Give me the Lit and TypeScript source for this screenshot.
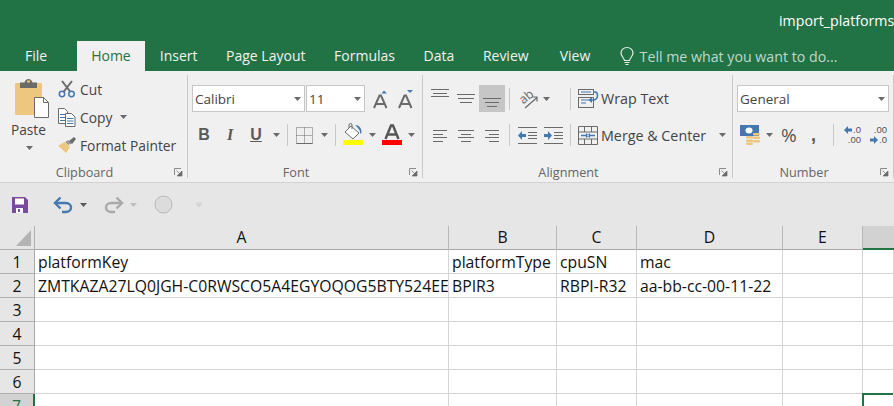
import { LitElement, html, svg, css } from 'lit';
import { customElement } from 'lit/decorators.js';

const BLUE = '#4478ae';
const GREY = '#6a6a6a';

// small svg wrapper, sizes are the pixel size of the ribbon glyphs
const icon = (w: number, h: number, body: unknown) =>
  html`<svg width=${w} height=${h} viewBox="0 0 ${w} ${h}" fill="none">${body}</svg>`;

const caret = () =>
  icon(7, 4, svg`<path d="M0 0h7L3.5 4z" fill="#6a6a6a"/>`);

// alignment glyphs: rows of [x, y, length], y counted from the top of the cell
const lines = (w: number, h: number, rows: number[][]) =>
  icon(w, h, rows.map(([x, y, l]) => svg`<rect x=${x} y=${y} width=${l} height="1" fill=${GREY}/>`));

const pasteIcon = icon(36, 40, svg`
  <rect x="1" y="4" width="27" height="32" rx="1" fill="#edc77e"/>
  <path d="M6 5V3.500h4.500Q11.500 0 14.500 0T18.500 3.500H23V9H6z" fill="#6a6a6a"/>
  <rect x="13" y="1.500" width="3" height="2" fill="#edc77e"/>
  <path d="M20.500 18.500h9l5 5v15h-14z" fill="#fff" stroke="#6a6a6a"/>
  <path d="M29.500 18.500v5h5" stroke="#6a6a6a"/>
`);

const cutIcon = icon(18, 18, svg`
  <path d="M4 1l8.500 11M14 1L5.500 12" stroke="#6a6a6a" stroke-width="2"/>
  <circle cx="4" cy="14" r="2.700" stroke=${BLUE} stroke-width="1.500"/>
  <circle cx="13.500" cy="14" r="2.700" stroke=${BLUE} stroke-width="1.500"/>
`);

const copyIcon = icon(18, 19, svg`
  <path d="M.5.500h6l3 3v12h-9z" fill="#fff" stroke="#6a6a6a"/>
  <path d="M2 6.500h6M2 9.500h6M2 12.500h6" stroke=${BLUE}/>
  <path d="M7.500 5.500h6l3.500 3.500v9.500h-9.500z" fill="#fff" stroke="#6a6a6a"/>
  <path d="M9 10.500h6.500M9 13h6.500M9 15.500h6.500" stroke=${BLUE}/>
`);

const painterIcon = icon(18, 16, svg`
  <path d="M0 8.500l7-3.500 5 5-4 6z" fill="#edc77e"/>
  <path d="M8 4.500l3 3M9.500 3.500l3.500 3.500" stroke="#8a8a8a" stroke-width="1.500"/>
  <path d="M11 4l5-4 2 2-4 5z" fill="#6a6a6a"/>
`);

const growIcon = (up: boolean) => icon(16, 18, svg`
  <path d="M1 18L6.500 5.500h1.500L13.500 18M3 14h9" stroke="#6a6a6a" stroke-width="2"/>
  <path d=${up ? 'M8.500 3.500L11 .5l3 3z' : 'M9 0h6l-3 3z'} fill=${BLUE}/>
`);

const borderIcon = icon(17, 17, svg`
  <path d="M.5.500h16v16h-16zM8.500.500v16M.5 8.500h16" stroke="#6a6a6a" stroke-dasharray="1 1"/>
  <path d="M.5 16.500h16" stroke="#6a6a6a"/>
`);

const fillIcon = icon(20, 24, svg`
  <path d="M8 3l8 7-6 6-8-7z" fill="#fff" stroke="#6a6a6a"/>
  <path d="M6 5V2a1.500 1.500 0 013 0v4" stroke="#6a6a6a"/>
  <path d="M12 2c4 0 6.500 3 6.500 7 0 2-1.500 2-1.500 0 0-2-2-4-5-7z" fill=${BLUE}/>
  <rect x="0" y="17" width="20" height="5" fill="#ffff00"/>
`);

const fontColorIcon = icon(20, 24, svg`
  <path d="M3.500 16L9 2.500h2L16.500 16M5.500 11.500h9" stroke="#555" stroke-width="2.400"/>
  <rect x="0" y="17" width="20" height="5" fill="#ff0000"/>
`);

const orientIcon = icon(20, 20, svg`
  <path d="M7 19L18.500 9M14.500 8h4.500v4.500" stroke="#6a6a6a" stroke-width="1.200"/>
  <text x="1.500" y="13" transform="rotate(-40 7 9)" font-family="Open Sans" font-size="12.500" fill="#6a6a6a">ab</text>
`);

const indentIcon = (dec: boolean) => icon(19, 17, svg`
  <path d="M0 .5h19M0 16.500h19M10 5.500h9M10 8.500h9M10 11.500h9" stroke="#6a6a6a"/>
  ${dec
    ? svg`<path d="M0 8.500l4-4.500v3h4v3H4v3z" fill=${BLUE}/>`
    : svg`<path d="M8 8.500l-4-4.500v3H0v3h4v3z" fill=${BLUE}/>`}
`);

const wrapIcon = icon(20, 19, svg`
  <rect x=".5" y=".5" width="15" height="5" stroke="#6a6a6a"/>
  <rect x=".5" y="8.500" width="15" height="10" stroke="#6a6a6a"/>
  <path d="M3 3h10M3 11h9M3 14h5" stroke=${BLUE}/>
  <path d="M15 3h2q2.500 0 2.500 3.500T16 11h-4" stroke=${BLUE} stroke-width="1.500"/>
  <path d="M14 8l-3.500 3 3.500 3z" fill=${BLUE}/>
`);

const mergeIcon = icon(20, 19, svg`
  <path d="M.5.500h19v18H.5zM.5 6h19M.5 13h19M6.500.500V6M13.500.500V6M6.500 13v5.500M13.500 13v5.500" stroke="#6a6a6a"/>
  <path d="M3 9.500h5M17 9.500h-5" stroke=${BLUE} stroke-width="1.500"/>
  <path d="M8 7l3 2.500-3 2.500zM12 7L9 9.500l3 2.500z" fill=${BLUE}/>
`);

const currencyIcon = icon(20, 20, svg`
  <rect x="0" y="0" width="19" height="11" fill=${BLUE}/>
  <ellipse cx="9" cy="5.500" rx="3.500" ry="3" fill="#fff"/>
  <rect x="13" y="8" width="7" height="2.500" rx="1" fill="#edc77e"/>
  <rect x="13" y="11.500" width="7" height="2.500" rx="1" fill="#edc77e"/>
  <rect x="13" y="15" width="7" height="2.500" rx="1" fill="#edc77e"/>
  <rect x="6" y="11" width="7" height="2.500" rx="1" fill="#edc77e"/>
  <rect x="6" y="14.500" width="7" height="2.500" rx="1" fill="#edc77e"/>
  <rect x="6" y="17.500" width="7" height="2.500" rx="1" fill="#edc77e"/>
`);

const arrow = (right: boolean) => right
  ? svg`<path d="M8 4L4 0v2.500H0v3h4V8z" fill=${BLUE}/>`
  : svg`<path d="M0 4l4-4v2.500h4v3H4V8z" fill=${BLUE}/>`;

const launcher = icon(8, 8, svg`
  <path d="M.5 7V.5H7" stroke="#8a8a8a"/>
  <path d="M2.500 2.500l3.500 3.500M8 3v5H3z" stroke="#6a6a6a" fill="#6a6a6a" stroke-width=".7"/>
`);

const COLS = ['A', 'B', 'C', 'D', 'E'];
const ROWS: string[][] = [
  ['platformKey', 'platformType', 'cpuSN', 'mac', '', ''],
  ['ZMTKAZA27LQ0JGH-C0RWSCO5A4EGYOQOG5BTY524EE', 'BPIR3', 'RBPI-R32', 'aa-bb-cc-00-11-22', '', ''],
  ['', '', '', '', '', ''],
  ['', '', '', '', '', ''],
  ['', '', '', '', '', ''],
  ['', '', '', '', '', ''],
  ['', '', '', '', '', ''],
];

@customElement('app-root')
export class AppRoot extends LitElement {
  static styles = css`
    :host {
      display: block;
      width: 894px;
      height: 406px;
      overflow: hidden;
      background: #e6e6e6;
      font-family: 'Open Sans', sans-serif;
      color: #444;
    }
    svg { display: block; flex: none; overflow: visible; }

    .title {
      height: 41px;
      background: #217346;
      color: #fff;
      font-size: 14.200px;
      line-height: 41px;
      padding-left: 779px;
      white-space: nowrap;
      overflow: hidden;
    }
    .tabs {
      height: 30px;
      background: #217346;
      display: flex;
      align-items: center;
      padding-left: 25px;
      color: #f1f1f1;
      font-size: 14px;
      white-space: nowrap;
    }
    .tab { padding: 0 14.300px; line-height: 30px; }
    .tab.file { padding: 0 15px 0 0; margin-right: 15px; }
    .tab.active { background: #f0f0f0; color: #217346; padding: 0 14px; margin-right: .7px; }
    .tab.view { margin-left: 2.500px; }
    .tell {
      display: flex;
      align-items: center;
      gap: 6px;
      margin-left: 15px;
      font-size: 14.200px;
      color: #bfd9ca;
    }

    .ribbon {
      height: 112px;
      box-sizing: border-box;
      display: flex;
      background: #f0f0f0;
      border-bottom: 1px solid #d2d2d2;
      font-size: 14px;
      white-space: nowrap;
    }
    .group {
      display: flex;
      flex-direction: column;
      box-sizing: border-box;
      margin-top: 4px;
      height: 103px;
      border-right: 1px solid #c9c9c9;
    }
    .body { height: 83px; flex: none; }
    .label {
      height: 20px;
      box-sizing: border-box;
      padding: 8px 18px 0 0;
      display: flex;
      align-items: center;
      justify-content: center;
      position: relative;
      font-size: 12.700px;
      color: #666;
    }
    .launch { position: absolute; right: 5px; top: 10px; }

    .clipboard { width: 188px; }
    .clipboard .body { display: flex; }
    .paste {
      width: 58px;
      flex: none;
      box-sizing: border-box;
      padding: 4px 0 0 14px;
      display: flex;
      flex-direction: column;
    }
    .paste span { margin: 1px 0 0 -3px; line-height: 20px; width: 36px; font-size: 13.700px; }
    .paste .c { margin: 6px 0 0 12px; }
    .clip-col { display: flex; flex-direction: column; font-size: 13.800px; }
    .clip-row { height: 28px; flex: none; display: flex; align-items: center; }
    .clip-row .i { width: 22px; }
    .clip-row .caret { margin-left: 8px; }

    .font { width: 235px; }
    .combo {
      box-sizing: border-box;
      height: 27px;
      background: #fff;
      border: 1px solid #c6c6c6;
      display: flex;
      align-items: center;
      justify-content: space-between;
      padding: 0 3px 0 2px;
      font-size: 13.500px;
    }
    .font .r1 {
      display: flex;
      align-items: center;
      padding: 10px 0 0 4px;
      height: 27px;
    }
    .font .r2 {
      display: flex;
      align-items: center;
      height: 24px;
      margin-top: 11px;
    }
    .sep { width: 1px; height: 22px; background: #c9c9c9; flex: none; }
    .bf {
      font-family: 'Liberation Sans', sans-serif;
      font-size: 16px;
      color: #5a5a5a;
      font-weight: 700;
      text-align: center;
      line-height: 20px;
    }

    .align { width: 310px; }
    .align .body {
      display: grid;
      grid-template-columns: 86px 1px 60px 1px 1fr;
      grid-template-rows: 27px 24px;
      row-gap: 11px;
      padding-top: 10px;
      box-sizing: border-box;
      align-items: center;
    }
    .cell-row { display: flex; align-items: center; }
    .selected { background: #c6c6c6; }
    .al { display: flex; align-items: flex-start; justify-content: center; width: 26px; }
    .big { display: flex; align-items: center; padding-left: 7px; gap: 3px; font-size: 14.300px; }

    .number { width: 161px; }
    .number .body { padding-top: 10px; box-sizing: border-box; }
    .number .combo { width: 152px; margin-left: 4px; }
    .number .r2 { display: flex; align-items: center; height: 24px; margin-top: 11px; }
    .pct { font-size: 19px; color: #555; width: 15px; line-height: 24px; }
    .comma { font-family: 'Liberation Sans', sans-serif; font-weight: 700; font-size: 18px; color: #555; line-height: 20px; width: 6px; }
    .dec { width: 18px; height: 20px; font-size: 9.500px; line-height: 11px; color: #555; font-family: 'Liberation Sans', sans-serif; display: flex; flex-direction: column; justify-content: center; }
    .dec .row { display: flex; align-items: center; justify-content: flex-end; gap: 1px; height: 11px; margin-top: -1px; }

    .qat {
      height: 43px;
      box-sizing: border-box;
      display: flex;
      align-items: center;
      padding-left: 12px;
      background: #e6e6e6;
    }

    .sheet {
      display: grid;
      grid-template-columns: 35px 414px 108px 80px 146px 80px 31px;
      grid-auto-rows: 24px;
      background: #fff;
      font-size: 15.750px;
      color: #111;
    }
    .corner, .ch, .rh { background: #e6e6e6; box-sizing: border-box; }
    .corner { border-right: 1px solid #b0b0b0; border-bottom: 1px solid #b0b0b0; display: flex; align-items: flex-end; justify-content: flex-end; padding: 0 3px 3px 0; }
    .ch { border-right: 1px solid #b8b8b8; border-bottom: 1px solid #a8a8a8; text-align: center; line-height: 23px; }
    .ch.on { background: #d2d2d2; border-bottom: 2px solid #217346; border-right: 0; }
    .rh { border-right: 1px solid #a8a8a8; border-bottom: 1px solid #b0b0b0; text-align: center; line-height: 24px; }
    .rh.on { background: #d2d2d2; border-right: 2px solid #217346; color: #217346; }
    .cell {
      box-sizing: border-box;
      border-right: 1px solid #d4d4d4;
      border-bottom: 1px solid #d4d4d4;
      padding: 0 0 0 3px;
      line-height: 24px;
      white-space: nowrap;
      overflow: hidden;
    }
    .cell.sel { box-shadow: inset 2px 2px 0 #217346; margin: -1px 0 0 -1px; }
  `;

  render() {
    return html`
      <div class="title">import_platforms</div>
      <div class="tabs">
        <div class="tab file">File</div>
        <div class="tab active">Home</div>
        ${['Insert', 'Page Layout', 'Formulas', 'Data', 'Review'].map((t) => html`<div class="tab">${t}</div>`)}
        <div class="tab view">View</div>
        <div class="tell">
          ${icon(14, 19, svg`
            <path d="M4.500 13.500C4 10.500 1 9.500 1 6a6 5.500 0 0112 0c0 3.500-3 4.500-3.500 7.500z" stroke="#e8f0eb" stroke-width="1.200"/>
            <path d="M4.500 15.500h5M5.500 17.500h3" stroke="#e8f0eb" stroke-width="1.200"/>
          `)}
          <span>Tell me what you want to do...</span>
        </div>
      </div>
      <div class="ribbon">
        ${this.renderClipboard()}
        ${this.renderFont()}
        ${this.renderAlign()}
        ${this.renderNumber()}
      </div>
      <div class="qat">
        ${icon(16, 16, svg`
          <path d="M0 0h13l3 3v13H0z" fill="#7b4ba0"/>
          <rect x="3" y="1.500" width="9" height="6" fill="#fff"/>
          <rect x="4" y="11" width="7" height="5" fill="#fff"/>
          <rect x="6" y="12" width="2" height="3" fill="#7b4ba0"/>
        `)}
        <div style="width:26px"></div>
        ${icon(19, 16, svg`
          <path d="M1 6h11a5 4.500 0 010 9H8" stroke=${BLUE} stroke-width="2.400"/>
          <path d="M6.500 .5L1 6l5.500 5.500" stroke=${BLUE} stroke-width="2.400"/>
        `)}
        <div style="margin-left:7px">${icon(7, 4, svg`<path d="M0 0h7L3.500 4z" fill="#5a5a5a"/>`)}</div>
        <div style="margin-left:17px">${icon(19, 16, svg`
          <path d="M18 6H7a5 4.500 0 000 9h4" stroke="#a9a9a9" stroke-width="2.400"/>
          <path d="M12.500 .5L18 6l-5.500 5.500" stroke="#a9a9a9" stroke-width="2.400"/>
        `)}</div>
        <div style="margin-left:7px">${icon(7, 4, svg`<path d="M0 0h7L3.500 4z" fill="#bdbdbd"/>`)}</div>
        <div style="margin-left:17px">${icon(19, 19, svg`<circle cx="9.500" cy="9.500" r="8.500" fill="#dcdcdc" stroke="#b8b8b8"/>`)}</div>
        <div style="margin-left:23px">${icon(6, 6, svg`<path d="M0 .5h6M0 2h6L3 5z" stroke="#d2d2d2" fill="#d2d2d2" stroke-width=".6"/>`)}</div>
      </div>
      ${this.renderSheet()}
    `;
  }

  private renderClipboard() {
    return html`
      <div class="group clipboard">
        <div class="body">
          <div class="paste">
            ${pasteIcon}
            <span>Paste</span>
            <div class="c">${caret()}</div>
          </div>
          <div class="clip-col">
            <div class="clip-row"><div class="i">${cutIcon}</div>Cut</div>
            <div class="clip-row"><div class="i">${copyIcon}</div>Copy<div class="caret">${caret()}</div></div>
            <div class="clip-row"><div class="i">${painterIcon}</div>Format Painter</div>
          </div>
        </div>
        <div class="label">Clipboard<div class="launch">${launcher}</div></div>
      </div>
    `;
  }

  private renderFont() {
    return html`
      <div class="group font">
        <div class="body">
          <div class="r1">
            <div class="combo" style="width:113px">Calibri ${caret()}</div>
            <div class="combo" style="width:59px;margin-left:1px">11 ${caret()}</div>
            <div style="margin-left:8px">${growIcon(true)}</div>
            <div style="margin-left:9px">${growIcon(false)}</div>
          </div>
          <div class="r2">
            <div class="bf" style="width:14px;margin-left:9px">B</div>
            <div class="bf" style="width:14px;margin-left:12px;font-style:italic;font-family:'Liberation Serif',serif">I</div>
            <div class="bf" style="width:14px;margin-left:12px;text-decoration:underline">U</div>
            <div style="margin-left:10px">${caret()}</div>
            <div class="sep" style="margin-left:7px"></div>
            <div style="margin-left:8px">${borderIcon}</div>
            <div style="margin-left:8px">${caret()}</div>
            <div class="sep" style="margin-left:7px"></div>
            <div style="margin-left:7px">${fillIcon}</div>
            <div style="margin-left:6px">${caret()}</div>
            <div style="margin-left:6px">${fontColorIcon}</div>
            <div style="margin-left:6px">${caret()}</div>
          </div>
        </div>
        <div class="label">Font<div class="launch">${launcher}</div></div>
      </div>
    `;
  }

  private renderAlign() {
    return html`
      <div class="group align">
        <div class="body">
          <div class="cell-row" style="padding-left:4px">
            <div class="al">${lines(18, 27, [[0, 4, 18], [2, 8, 14], [0, 11, 18]])}</div>
            <div class="al">${lines(18, 27, [[0, 9, 18], [1, 13, 16], [3, 17, 12]])}</div>
            <div class="al selected">${lines(18, 27, [[0, 13, 18], [2, 17, 14], [4, 21, 10]])}</div>
          </div>
          <div class="sep"></div>
          <div class="cell-row" style="padding-left:8px">${orientIcon}<div style="margin-left:5px">${caret()}</div></div>
          <div class="sep"></div>
          <div class="big">${wrapIcon}<span>Wrap Text</span></div>

          <div class="cell-row" style="padding-left:4px">
            <div class="al">${lines(14, 24, [[0, 7, 14], [0, 11, 10], [0, 14, 14], [0, 18, 10]])}</div>
            <div class="al">${lines(16, 24, [[0, 7, 16], [3, 11, 10], [0, 14, 16], [3, 18, 10]])}</div>
            <div class="al">${lines(14, 24, [[0, 7, 14], [4, 11, 10], [0, 14, 14], [4, 18, 10]])}</div>
          </div>
          <div class="sep"></div>
          <div class="cell-row" style="padding-left:8px;gap:7px">${indentIcon(true)}${indentIcon(false)}</div>
          <div class="sep"></div>
          <div class="big">${mergeIcon}<span>Merge &amp; Center</span><div style="margin-left:10px">${caret()}</div></div>
        </div>
        <div class="label">Alignment<div class="launch">${launcher}</div></div>
      </div>
    `;
  }

  private renderNumber() {
    return html`
      <div class="group number">
        <div class="body">
          <div class="combo">General ${caret()}</div>
          <div class="r2">
            <div style="margin-left:7px">${currencyIcon}</div>
            <div style="margin-left:6px">${caret()}</div>
            <div class="pct" style="margin-left:8px">%</div>
            <div class="comma" style="margin-left:15px">,</div>
            <div class="sep" style="margin-left:16px"></div>
            <div class="dec" style="margin-left:9px">
              <div class="row">${icon(8, 8, arrow(false))}.0</div>
              <div class="row">.00</div>
            </div>
            <div class="dec" style="margin-left:8px">
              <div class="row">.00</div>
              <div class="row">${icon(8, 8, arrow(true))}.0</div>
            </div>
          </div>
        </div>
        <div class="label">Number<div class="launch">${launcher}</div></div>
      </div>
    `;
  }

  private renderSheet() {
    return html`
      <div class="sheet">
        <div class="corner">${icon(15, 16, svg`<path d="M15 0v16H0z" fill="#b4b4b4"/>`)}</div>
        ${COLS.map((c) => html`<div class="ch">${c}</div>`)}
        <div class="ch on"></div>
        ${ROWS.map((row, r) => html`
          <div class="rh ${r === 6 ? 'on' : ''}">${r + 1}</div>
          ${row.slice(0, 5).map((v) => html`<div class="cell">${v}</div>`)}
          <div class="cell ${r === 6 ? 'sel' : ''}"></div>
        `)}
      </div>
    `;
  }
}
